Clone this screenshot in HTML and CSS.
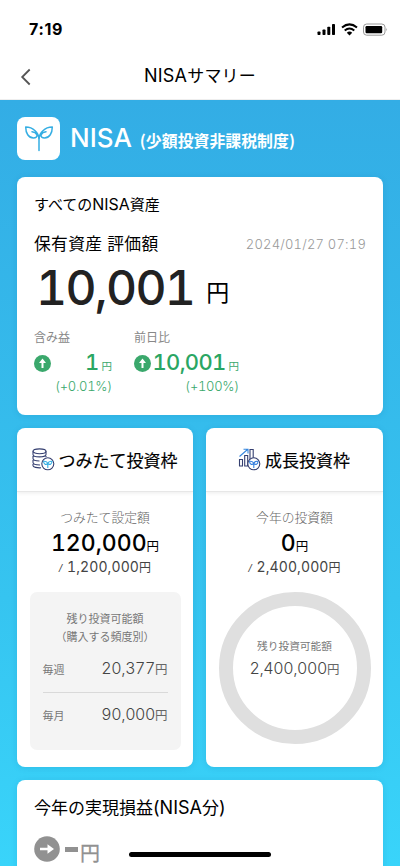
FILE: index.html
```html
<!DOCTYPE html>
<html lang="ja">
<head>
<meta charset="utf-8">
<meta name="viewport" content="width=device-width, initial-scale=1">
<title>NISAサマリー</title>
<link rel="stylesheet" href="styles.css">
</head>
<body>
<div class="phone">
  <header class="top">
    <div class="status">
      <span class="time">7:19</span>
      <svg class="status-icons" width="72" height="14" viewBox="0 0 72 14">
        <g><rect x="0.5" y="8.5" width="3" height="3.5" rx=".8"/><rect x="5.5" y="6.5" width="3" height="5.5" rx=".8"/><rect x="10.3" y="3.8" width="3" height="8.2" rx=".8"/><rect x="15" y="1" width="3" height="11" rx=".8"/></g>
        <g fill="none" stroke="#000" stroke-width="2"><path d="M25 4.6Q32.5-1.8 40 4.6"/><path d="M27.7 7.6Q32.5 3.5 37.3 7.6"/></g>
        <path d="M29.8 9.7Q32.5 7.5 35.2 9.7L32.5 12.4Z"/>
        <rect x="46.5" y="1" width="21.5" height="11.2" rx="3.2" fill="none" stroke="#999"/>
        <rect x="48.5" y="3" width="16.7" height="7.2" rx="1.2"/>
        <path d="M69.3 5Q71 6.5 69.3 8.2Z" fill="#999"/>
      </svg>
    </div>
    <nav class="nav">
      <svg class="back" width="12" height="18" viewBox="0 0 12 18"><path d="M9.7 1.5L2.2 9l7.5 7.5" fill="none" stroke="#555" stroke-width="1.8"/></svg>
      <h1><span class="latin">NISA</span>サマリー</h1>
    </nav>
  </header>
  <main>
    <div class="hero">
      <span class="logo">
        <svg width="30" height="28" viewBox="0 0 30 28" fill="none" stroke="#35aee3" stroke-width="1.5" stroke-linecap="round" stroke-linejoin="round"><path d="M15 25.500V13.500C14.500 8 9.500 2 1.700 2C1.700 8 4.500 13 9.500 13C12 13 13 11.500 13 10C12 8 10 7 8 6.800"/><path d="M15 13.500C15.500 8 20.500 2 28.300 2C28.300 8 25.500 13 20.500 13C18 13 17 11.500 17 10C18 8 20 7 22 6.800"/></svg>
      </span>
      <span class="brand">NISA</span><span class="brand-sub">(少額投資非課税制度)</span>
    </div>

    <section class="card assets">
      <h2>すべての<span class="latin">NISA</span>資産</h2>
      <div class="asset-head"><span class="asset-title">保有資産 評価額</span><time>2024/01/27 07:19</time></div>
      <div class="total"><span class="num total-num">10,001</span><span class="total-yen">円</span></div>
      <div class="changes">
        <div class="change gain">
          <span class="label">含み益</span>
          <div class="delta"><svg class="badge" width="17" height="17" viewBox="0 0 17 17"><circle cx="8.500" cy="8.500" r="8.500" fill="#3aa86c"/><path d="M8.500 3.500L12 8H9.500V13H7.500V8H5Z" fill="#fff"/></svg><span class="num delta-num">1</span><span class="delta-yen">円</span></div>
          <span class="num pct">(+0.01%)</span>
        </div>
        <div class="change daily">
          <span class="label">前日比</span>
          <div class="delta"><svg class="badge" width="17" height="17" viewBox="0 0 17 17"><circle cx="8.500" cy="8.500" r="8.500" fill="#3aa86c"/><path d="M8.500 3.500L12 8H9.500V13H7.500V8H5Z" fill="#fff"/></svg><span class="num delta-num">10,001</span><span class="delta-yen">円</span></div>
          <span class="num pct">(+100%)</span>
        </div>
      </div>
    </section>

    <div class="frames">
      <section class="card frame">
        <h3>
          <svg width="23" height="23" viewBox="0 0 23 23" fill="none" stroke="#353f70" stroke-width="1.100"><ellipse cx="7.500" cy="3.300" rx="6.500" ry="2.400"/><path d="M1 3.300V6.500C1 9.700 14 9.700 14 6.500V3.300M1 8V10.500C1 12 4 13 7.500 13M14 8V9M1 12V14.500C1 16 4 17 8 17M1 16V17.700C1 19.200 5 20 9 19.800"/><circle cx="15.800" cy="15.800" r="6" fill="#fff"/><g stroke="#35aee3"><path d="M15.800 20V15.500C15 13.200 13.500 13 11.600 13.300C11.500 16.300 14 17.200 15.800 15.500M15.800 15.500C16.600 13.200 18.100 13 20 13.300C20.100 16.300 17.600 17.200 15.800 15.500"/></g></svg>
          <span>つみたて投資枠</span>
        </h3>
        <div class="frame-body">
          <span class="sub">つみたて設定額</span>
          <div class="main-amt"><span class="num n">120,000</span><span class="y">円</span></div>
          <div class="limit"><i class="slash">/</i><span class="num n">1,200,000</span><span class="y">円</span></div>
          <div class="remain-box">
            <p>残り投資可能額</p>
            <p class="freq">（購入する頻度別）</p>
            <div class="remain-row"><span>毎週</span><span class="remain-amt"><span class="num n">20,377</span>円</span></div>
            <div class="remain-row last"><span>毎月</span><span class="remain-amt"><span class="num n">90,000</span>円</span></div>
          </div>
        </div>
      </section>
      <section class="card frame">
        <h3>
          <svg width="23" height="23" viewBox="0 0 23 23" fill="none" stroke="#353f70" stroke-width="1.100"><path d="M1.500 11.500H4.500V18H1.500ZM6.700 18V7.500H9.700V18ZM12 12V1.500H15.200V10"/><path d="M1.500 8.500L9.500 1.500M5.500 1.200H10V5.500" stroke="#3687df"/><circle cx="15.800" cy="15.800" r="6" fill="#fff"/><g stroke="#357fdf"><path d="M15.800 20V15.500C15 13.200 13.500 13 11.600 13.300C11.500 16.300 14 17.200 15.800 15.500M15.800 15.500C16.600 13.200 18.100 13 20 13.300C20.100 16.300 17.600 17.200 15.800 15.500"/></g></svg>
          <span>成長投資枠</span>
        </h3>
        <div class="frame-body">
          <span class="sub">今年の投資額</span>
          <div class="main-amt"><span class="num n">0</span><span class="y">円</span></div>
          <div class="limit"><i class="slash">/</i><span class="num n">2,400,000</span><span class="y">円</span></div>
          <div class="ring"><p>残り投資可能額</p><div class="remain-amt"><span class="num n">2,400,000</span>円</div></div>
        </div>
      </section>
    </div>

    <section class="card realized">
      <h2>今年の実現損益<span class="latin">(NISA</span>分<span class="latin">)</span></h2>
      <div class="realized-row"><svg width="26" height="26" viewBox="0 0 26 26"><circle cx="13" cy="13" r="12.800" fill="#919191"/><path d="M6 11.800H13.500V8.200L20 13L13.500 17.800V14.200H6Z" fill="#fff"/></svg><span class="dash"></span><span class="grey-yen">円</span></div>
    </section>
  </main>
  <div class="home-bar"></div>
</div>
</body>
</html>
```
FILE: styles.css
```css
* { box-sizing: border-box; }
body { margin: 0; font-family: "Liberation Sans", "Noto Sans CJK JP", sans-serif; color: #000; }
h1, h2, h3, p { margin: 0; font-weight: 400; }
svg { display: block; flex: none; }
span, time { white-space: nowrap; }
.phone { width: 400px; height: 866px; overflow: hidden; position: relative; display: flex; flex-direction: column; }
.num { font-family: Inter, sans-serif; font-feature-settings: "tnum"; }
.latin { font-family: Inter, sans-serif; font-size: 1.06em; line-height: 1; }
.top { height: 100px; flex: none; background: #fff; border-bottom: 1px solid #eee; }
.status { height: 54px; display: flex; justify-content: space-between; padding: 19px 11px 0 29px; }
.time { font: 700 16px/20px Inter, sans-serif; letter-spacing: .7px; }
.status-icons { margin-top: 4px; }
.nav { height: 45px; display: flex; align-items: center; padding-left: 20px; }
.nav h1 { flex: 1; padding-right: 32px; text-align: center; font-size: 17px; line-height: 24px; letter-spacing: .2px; }
main { flex: none; height: 766px; padding: 17px 17px 0; background: linear-gradient(#33ade5, #36c4f0 65%, #39d4fa); }
.hero { display: flex; align-items: center; height: 43px; color: #fff; }
.logo { width: 43px; height: 43px; border-radius: 8px; background: #fff; display: flex; justify-content: center; align-items: center; }
.brand { font-family: Inter, sans-serif; font-size: 26px; font-weight: 500; margin-left: 10px; line-height: 40px; margin-top: -2px; }
.brand-sub { font-family: "Noto Sans CJK JP", sans-serif; font-size: 15.9px; margin: 3px 0 0 8px; font-weight: 600; }
.card { background: #fff; border-radius: 8px; box-shadow: 0 1px 6px rgba(0, 90, 140, .14); }
.assets { height: 238px; margin-top: 17px; padding: 17px 17px 0; }
h2 { font-size: 15px; line-height: 22px; }
.asset-head { display: flex; justify-content: space-between; height: 24px; margin-top: 17px; line-height: 24px; }
.asset-title { font-size: 16.8px; letter-spacing: .3px; }
time { color: #999; font: 300 13px/22px Inter, sans-serif; font-feature-settings: "tnum"; letter-spacing: .2px; }
.total { display: flex; height: 58px; align-items: baseline; margin-top: 2px; line-height: 58px; }
.total-num { font-size: 48px; font-weight: 500; color: #222; letter-spacing: -1.7px; margin-left: 2px; }
.total-yen { font-size: 23px; margin-left: 12px; position: relative; top: -4px; }
.changes { display: flex; margin-top: 12px; gap: 22px; }
.change { display: flex; flex-direction: column; color: #3aa86c; }
.gain { width: 78px; }
.daily { width: 105px; }
.label { font-size: 12px; line-height: 18px; color: #888; }
.delta { display: flex; align-items: baseline; height: 28px; line-height: 28px; margin-top: 1px; }
.badge { align-self: center; margin-top: 2px; margin-right: auto; }
.delta-num { font-size: 22px; font-weight: 500; color: #2aa663; letter-spacing: -.7px; }
.delta-yen { font-size: 10.5px; margin-left: 3px; }
.pct { font-size: 13px; font-weight: 300; line-height: 20px; text-align: right; letter-spacing: -.3px; }
.frames { display: grid; grid-template-columns: 176px 177px; gap: 13px; margin-top: 13px; }
.frame { height: 339px; overflow: hidden; }
h3 { height: 64px; display: flex; align-items: center; justify-content: center; gap: 4px; padding-right: 1px; font-size: 17px; border-bottom: 1px solid #e7e7e7; box-shadow: 0 1px 4px rgba(0, 0, 0, .08); -webkit-text-stroke: .15px; }
.frame-body { display: flex; flex-direction: column; align-items: center; padding: 16px 12px 0; }
.sub { font-size: 12.8px; line-height: 20px; color: #666; font-weight: 300; }
.main-amt { height: 30px; line-height: 30px; display: flex; align-items: baseline; }
.main-amt .n { font-size: 23px; font-weight: 500; }
.main-amt .y { font-size: 12.5px; }
.limit { height: 20px; line-height: 18px; display: flex; align-items: baseline; color: #444; }
.limit .n { font-size: 14px; letter-spacing: .1px; }
.limit .y { font-size: 12px; }
.slash { font-size: 11px; margin-right: 5px; }
.remain-box { width: 151px; height: 158px; margin-top: 14px; background: #f4f4f4; border-radius: 7px; padding: 19px 13px 0; color: #777; font-size: 11px; text-align: center; }
.remain-box p { line-height: 17.5px; white-space: nowrap; }
.freq { margin: 0 -8px; }
.remain-row { display: flex; justify-content: space-between; align-items: center; height: 47px; border-bottom: 1px solid #d9d9d9; }
.remain-row.last { border: 0; height: 43px; }
.remain-amt { font-size: 12.5px; line-height: 22px; color: #666; }
.remain-amt .n { font-size: 16px; font-weight: 300; letter-spacing: -.4px; color: #444; }
.ring { width: 152px; height: 152px; margin-top: 14px; border: 14px solid #dfdfdf; border-radius: 50%; display: flex; flex-direction: column; align-items: center; padding-top: 31px; color: #777; font-size: 10.7px; }
.ring p { line-height: 18px; }
.ring .remain-amt { margin-top: 2px; }
.realized { height: 110px; margin-top: 13px; padding: 17px; }
.realized h2 { font-size: 17px; line-height: 24px; }
.realized-row { display: flex; align-items: center; margin-top: 13px; color: #919191; }
.dash { width: 13px; height: 5px; background: currentColor; margin: 2px 2px 0 5px; }
.grey-yen { font-size: 20px; line-height: 26px; margin-top: 7px; margin-bottom: -4px; -webkit-text-stroke: .3px; }
.home-bar { position: absolute; left: 129px; bottom: 9px; width: 142px; height: 5px; border-radius: 3px; background: #000; }
```
